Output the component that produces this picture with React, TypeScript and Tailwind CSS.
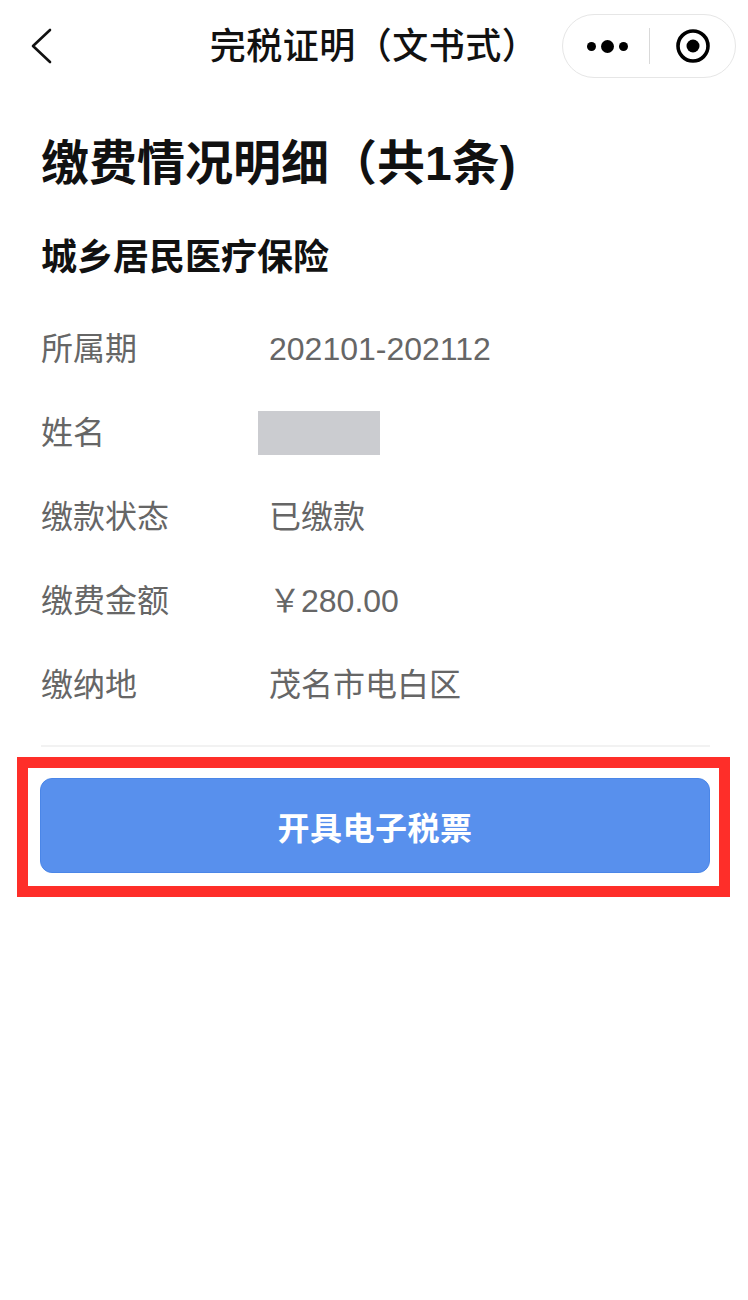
import React from 'react';

const rows: { label: string; value: string | null }[] = [
  { label: '所属期', value: '202101-202112' },
  { label: '姓名', value: null },
  { label: '缴款状态', value: '已缴款' },
  { label: '缴费金额', value: '￥280.00' },
  { label: '缴纳地', value: '茂名市电白区' },
];

const font = { fontFamily: '"Liberation Sans", "Noto Sans CJK SC", sans-serif' };

const NavBar: React.FC = () => (
  <div className="relative h-[94px] flex items-center justify-center">
    {/* 返回 */}
    <svg className="absolute left-[26px] top-[24px]" width="32" height="46" viewBox="0 0 32 46">
      <path d="M24 6 L7 22 L24 38" fill="none" stroke="#111" strokeWidth="2.6" strokeLinecap="round" strokeLinejoin="round" />
    </svg>
    <h1 className="text-[36px] leading-none font-medium text-[#111] tracking-[0.5px]">完税证明（文书式）</h1>
    {/* 小程序胶囊 */}
    <div className="absolute left-[562px] top-[14px] w-[174px] h-[64px] rounded-full border border-[#e6e6e6] bg-white flex items-center">
      <div className="w-[86px] flex items-center justify-center gap-[5px] pl-[2px]">
        <span className="w-[9px] h-[9px] rounded-full bg-black" />
        <span className="w-[13px] h-[13px] rounded-full bg-black" />
        <span className="w-[9px] h-[9px] rounded-full bg-black" />
      </div>
      <div className="w-px h-[36px] bg-[#d9d9d9]" />
      <div className="flex-1 flex items-center justify-center">
        <svg width="36" height="36" viewBox="0 0 36 36">
          <circle cx="18" cy="18" r="15" fill="none" stroke="#000" strokeWidth="3.6" />
          <circle cx="18" cy="18" r="6.5" fill="#000" />
        </svg>
      </div>
    </div>
  </div>
);

const App: React.FC = () => {
  return (
    <div className="min-h-[1300px] bg-white" style={font}>
      <NavBar />

      <main className="pl-[41px] pr-[38px]">
        <h2 className="mt-[42px] h-[56px] flex items-center text-[48px] font-bold text-[#111] leading-none">
          缴费情况明细（共1条)
        </h2>
        <h3 className="mt-[44px] h-[44px] flex items-center text-[36px] font-bold text-[#111] leading-none">
          城乡居民医疗保险
        </h3>

        <div className="mt-[27px]">
          {rows.map((r) => (
            <div key={r.label} className="h-[84px] flex items-center text-[32px] text-[#666] leading-none">
              <span className="w-[228px] shrink-0">{r.label}</span>
              {r.value === null ? (
                <span className="ml-[-11px] w-[122px] h-[44px] bg-[#cbccd0]" />
              ) : (
                <span>{r.value}</span>
              )}
            </div>
          ))}
        </div>

        <div className="mt-[18px] h-[2px] bg-[#f2f2f2]" />
      </main>

      <div className="mt-[10px] ml-[17px] w-[713px] border-[11px] border-[#fe2e29] pt-[10px] pb-[13px] pl-[12px] pr-[9px]">
        <button className="w-[670px] h-[95px] pt-[6px] rounded-[12px] bg-[#5890ed] border-[1.5px] border-[#4a86e8] text-white text-[32px] font-bold flex items-center justify-center tracking-[0.5px]">
          开具电子税票
        </button>
      </div>
    </div>
  );
};

export default App;
